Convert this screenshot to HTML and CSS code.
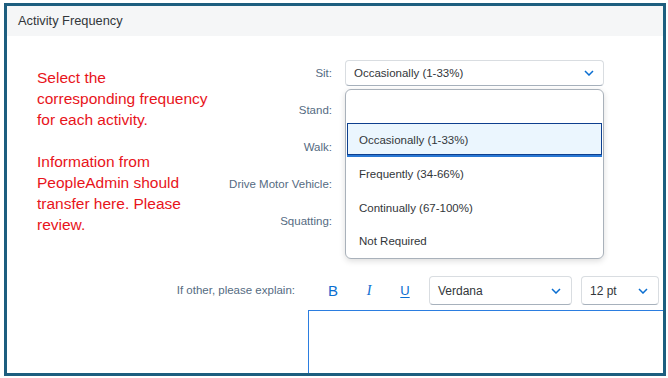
FILE: index.html
```html
<!DOCTYPE html>
<html lang="en">
<head>
<meta charset="utf-8">
<title>Activity Frequency</title>
<link rel="stylesheet" href="styles.css">
</head>
<body>
<div class="frame">
  <div class="header">Activity Frequency</div>
  <div class="main">
    <div class="note">
      <p>Select the<br>corresponding frequency<br>for each activity.</p>
      <p>Information from<br>PeopleAdmin should<br>transfer here. Please<br>review.</p>
    </div>
    <div class="form">
      <div class="label">Sit:</div>
      <div class="cell">
        <div class="field">
          <div class="select"><span>Occasionally (1-33%)</span><svg class="chev" viewBox="0 0 10 6"><path d="M1 1l4 4 4-4"/></svg></div>
          <div class="popup">
            <div class="opt"></div>
            <div class="opt sel">Occasionally (1-33%)</div>
            <div class="opt">Frequently (34-66%)</div>
            <div class="opt">Continually (67-100%)</div>
            <div class="opt">Not Required</div>
          </div>
        </div>
      </div>
      <div class="label">Stand:</div>
      <div class="cell"><div class="select"></div></div>
      <div class="label">Walk:</div>
      <div class="cell"><div class="select"></div></div>
      <div class="label">Drive Motor Vehicle:</div>
      <div class="cell"><div class="select"></div></div>
      <div class="label">Squatting:</div>
      <div class="cell"><div class="select"></div></div>
    </div>
  </div>
  <div class="explain">
    <div class="explain-label">If other, please explain:</div>
    <div class="editor-col">
      <div class="toolbar">
        <span class="tb b">B</span>
        <span class="tb i">I</span>
        <span class="tb u">U</span>
        <div class="select font"><span>Verdana</span><svg class="chev" viewBox="0 0 10 6"><path d="M1 1l4 4 4-4"/></svg></div>
        <div class="select size"><span>12 pt</span><svg class="chev" viewBox="0 0 10 6"><path d="M1 1l4 4 4-4"/></svg></div>
      </div>
      <div class="editor"></div>
    </div>
  </div>
</div>
</body>
</html>
```
FILE: styles.css
```css
* { box-sizing: border-box; }
html, body { margin: 0; padding: 0; background: #fff; }
body { font-family: "Liberation Sans", Arial, sans-serif; }

.frame {
  margin: 3px 0 0 4px;
  width: 662px;
  height: 373px;
  border: 3px solid #1d5e7f;
  overflow: hidden;
  background: #fff;
}

.header {
  height: 30px;
  line-height: 30px;
  padding-left: 11px;
  background: #f5f6f7;
  color: #32363a;
  font-size: 12.8px;
}

.main {
  display: flex;
  align-items: flex-start;
  padding-top: 18px;
}

.note {
  width: 213px;
  flex: none;
  padding: 13px 0 0 30px;
  color: #e8141b;
  font-size: 15.5px;
  line-height: 21px;
  white-space: nowrap;
}
.note p { margin: 0 0 21px 0; }
.note p:last-child { margin-bottom: 0; }

.form {
  display: grid;
  grid-template-columns: 112px 259px;
  grid-auto-rows: 37px;
  column-gap: 13px;
}

.label {
  display: flex;
  align-items: center;
  justify-content: flex-end;
  color: #556b82;
  font-size: 11.5px;
}

.cell {
  display: flex;
  align-items: center;
}

.field {
  position: relative;
  width: 100%;
}

.select {
  display: flex;
  align-items: center;
  justify-content: space-between;
  width: 100%;
  height: 26px;
  padding: 0 9px 0 8px;
  border: 1px solid #d9dde1;
  border-bottom-color: #a7b1bc;
  border-radius: 4px;
  background: #fff;
  color: #32363a;
  font-size: 11.5px;
}

.chev {
  width: 10px;
  height: 6px;
  fill: none;
  stroke: #0a6ed1;
  stroke-width: 1.5;
}

.popup {
  position: absolute;
  top: calc(100% + 3px);
  left: 0;
  width: 259px;
  padding-bottom: 1px;
  border: 1px solid #a9b1ba;
  border-radius: 6px;
  background: #fff;
  box-shadow: 0 2px 6px rgba(0, 0, 0, 0.14);
  z-index: 2;
}

.opt {
  height: 33.5px;
  display: flex;
  align-items: center;
  padding: 2px 0 0 13px;
  color: #32363a;
  font-size: 11.5px;
}

.opt.sel {
  background: #ebf6fe;
  box-shadow: inset 0 0 0 1px #0e3f8e;
  border-bottom: 2px solid #2a78d4;
  margin: 0 1px;
  padding: 3px 0 0 12px;
}

.explain {
  display: flex;
  margin-top: 37px;
  column-gap: 13px;
}

.explain-label {
  width: 288px;
  flex: none;
  text-align: right;
  line-height: 29px;
  color: #556b82;
  font-size: 11.5px;
}

.editor-col {
  flex: none;
  width: 400px;
}

.toolbar {
  display: flex;
  align-items: center;
  height: 29px;
  padding-left: 7px;
}

.tb {
  width: 36px;
  text-align: center;
  color: #0a6ed1;
}
.tb.b { font-size: 15px; }
.tb.i { font-family: "Liberation Serif", serif; font-style: italic; font-size: 14px; }
.tb.u { font-size: 13px; text-decoration: underline; text-underline-offset: 2px; }

.select.font {
  width: 143px;
  height: 29px;
  margin-left: 6px;
  padding: 0 10px 0 8px;
  font-size: 12px;
}
.select.size {
  width: 78px;
  height: 29px;
  margin-left: 9px;
  padding: 0 10px 0 8px;
  font-size: 12px;
}

.editor {
  margin-top: 5px;
  height: 80px;
  border: 1px solid #2b7de0;
}
```
